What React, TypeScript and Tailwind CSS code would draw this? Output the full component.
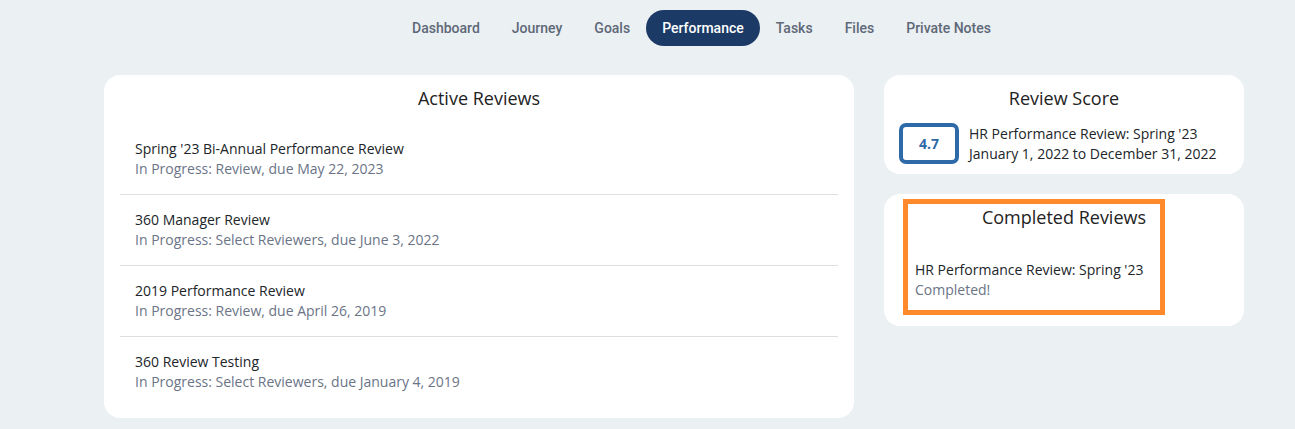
const tabs = ["Dashboard", "Journey", "Goals", "Performance", "Tasks", "Files", "Private Notes"];

const activeReviews = [
  { title: "Spring '23 Bi-Annual Performance Review", status: "In Progress: Review, due May 22, 2023" },
  { title: "360 Manager Review", status: "In Progress: Select Reviewers, due June 3, 2022" },
  { title: "2019 Performance Review", status: "In Progress: Review, due April 26, 2019" },
  { title: "360 Review Testing", status: "In Progress: Select Reviewers, due January 4, 2019" },
];

const App = () => {
  return (
    <div className="min-h-[429px] bg-[#ebf0f3] font-['Open_Sans',sans-serif] text-[#212529]">
      {/* Tabs */}
      <nav className="flex justify-center pl-[108px] pt-[10px] font-['Roboto',sans-serif] text-[14px] font-medium">
        {tabs.map((t) => (
          <div
            key={t}
            className={
              t === "Performance"
                ? "h-[36px] px-4 flex items-center rounded-full bg-[#1b3a66] text-white"
                : "h-[36px] px-4 flex items-center text-[#5e6878]"
            }
          >
            {t}
          </div>
        ))}
      </nav>

      <main className="flex gap-[30px] pl-[104px] mt-[29px] items-start">
        {/* Active reviews */}
        <section className="w-[750px] bg-white rounded-2xl pt-[11px] pb-[11px]">
          <h2 className="text-center text-[18px] leading-[24px] mb-[14px] text-[#222]">Active Reviews</h2>
          <ul className="mx-4">
            {activeReviews.map((r, i) => (
              <li
                key={r.title}
                className={
                  i < activeReviews.length - 1
                    ? "px-[15px] py-[15px] border-b border-[#dedfe0] text-[14px] leading-[20px]"
                    : "px-[15px] py-[15px] text-[14px] leading-[20px]"
                }
              >
                <div>{r.title}</div>
                <div className="text-[#6b7486]">{r.status}</div>
              </li>
            ))}
          </ul>
        </section>

        <div className="w-[360px] flex flex-col gap-[20px]">
          {/* Review score */}
          <section className="bg-white rounded-2xl pt-[11px] pb-[10px] px-[15px]">
            <h2 className="text-center text-[18px] leading-[24px] text-[#222]">Review Score</h2>
            <div className="flex items-center gap-[10px] mt-[13px]">
              <div className="w-[60px] h-[41px] border-[4px] border-[#2f6aa8] rounded-[7px] flex items-center justify-center text-[#2f6aa8] font-bold text-[14px]">
                4.7
              </div>
              <div className="text-[14px] leading-[20px]">
                <div>HR Performance Review: Spring '23</div>
                <div>January 1, 2022 to December 31, 2022</div>
              </div>
            </div>
          </section>

          {/* Completed reviews */}
          <section className="relative bg-white rounded-2xl pt-[11px] pb-[26px]">
            <h2 className="text-center text-[18px] leading-[24px] text-[#222]">Completed Reviews</h2>
            <div className="pl-[31px] mt-[31px] text-[14px] leading-[20px]">
              <div>HR Performance Review: Spring '23</div>
              <div className="text-[#6b7486]">Completed!</div>
            </div>
            <div className="absolute left-[19px] top-[5px] w-[262px] h-[116px] border-[5px] border-[#ff8a2b] pointer-events-none" />
          </section>
        </div>
      </main>
    </div>
  );
};

export default App;
